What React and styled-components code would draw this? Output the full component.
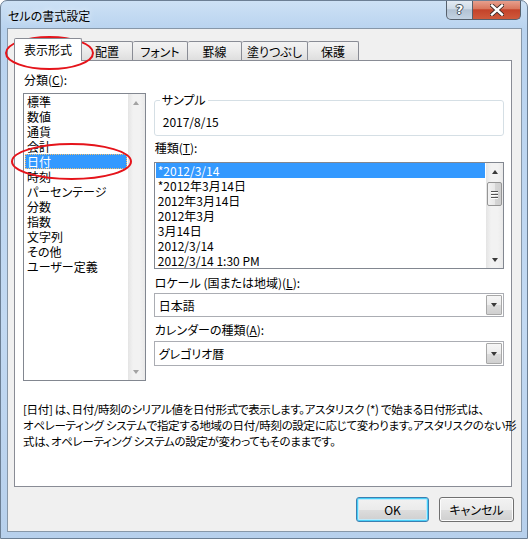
import React from 'react';
import styled, { createGlobalStyle } from 'styled-components';

const GlobalStyle = createGlobalStyle`
  html, body {
    margin: 0;
    padding: 0;
    background: #fff;
  }
  body {
    font-family: "Noto Sans CJK JP", "Noto Sans", sans-serif;
    font-size: 12px;
    color: #000;
    font-feature-settings: "palt";
  }
`;

const Window = styled.div`
  position: relative;
  width: 528px;
  height: 539px;
  box-sizing: border-box;
  border: 1px solid #6c7f94;
  border-radius: 7px 7px 0 0;
  background: linear-gradient(180deg, #cde1f5 0%, #b9d3ef 28px, #c2d9f2 60%, #b7d0ec 100%);
  display: flex;
  flex-direction: column;
  overflow: hidden;
`;

const TitleBar = styled.div`
  height: 27px;
  display: flex;
  align-items: flex-start;
  justify-content: space-between;
  padding-left: 7px;
`;

const Title = styled.div`
  margin-top: 8px;
  line-height: 14px;
  text-shadow: 0 0 6px rgba(255, 255, 255, 0.9);
`;

const CaptionButtons = styled.div`
  display: flex;
  margin-top: -1px;
  margin-right: 6px;
`;

const CaptionButton = styled.div`
  width: ${p => p.w}px;
  height: 20px;
  box-sizing: border-box;
  border: 1px solid #56606c;
  border-top: none;
  border-left-width: ${p => (p.close ? 0 : 1)}px;
  border-radius: ${p => (p.close ? '0 0 5px 0' : '0 0 0 5px')};
  background: ${p =>
    p.close
      ? 'linear-gradient(180deg, #e8a493 0%, #d9785f 45%, #c4432a 52%, #cf5a3c 100%)'
      : 'linear-gradient(180deg, #e6edf5 0%, #cfdbe7 45%, #b2c2d3 52%, #c3d3e3 100%)'};
  display: flex;
  align-items: center;
  justify-content: center;
  color: #fff;
  font-family: "DejaVu Sans", sans-serif;
  font-weight: bold;
  font-size: 13px;
  line-height: 1;
  text-shadow: 0 0 1px #2c3440, 1px 0 0 #4a5563, -1px 0 0 #4a5563, 0 1px 0 #4a5563, 0 -1px 0 #4a5563;
`;

const Client = styled.div`
  flex: 1;
  margin: 0 5px 6px 6px;
  background: #f0f0f0;
  border: 1px solid #8797a8;
  display: flex;
  flex-direction: column;
`;

const TabRow = styled.div`
  display: flex;
  align-items: flex-end;
  height: 22px;
  margin-top: 9px;
  padding-left: 6px;
`;

const Tab = styled.div`
  position: relative;
  width: ${p => p.w}px;
  height: ${p => (p.active ? 23 : 19)}px;
  margin-bottom: ${p => (p.active ? -1 : 0)}px;
  z-index: ${p => (p.active ? 1 : 0)};
  box-sizing: border-box;
  border: 1px solid #898c95;
  border-bottom: none;
  border-left-width: ${p => (p.first || p.active ? 1 : 0)}px;
  border-radius: 2px 2px 0 0;
  background: ${p => (p.active ? '#fff' : 'linear-gradient(180deg, #f3f3f3 0%, #ebebeb 50%, #dedede 100%)')};
  display: flex;
  align-items: center;
  justify-content: center;
  line-height: 14px;
  padding-top: ${p => (p.active ? 0 : 1)}px;
`;

const Panel = styled.div`
  width: 498px;
  height: 427px;
  margin-left: 6px;
  box-sizing: border-box;
  background: #fff;
  border: 1px solid #898c95;
  padding: 12px 7px 0 8px;
`;

const TopArea = styled.div`
  display: flex;
  gap: 8px;
`;

const LeftColumn = styled.div`
  width: 123px;
  display: flex;
  flex-direction: column;
`;

const RightColumn = styled.div`
  width: 351px;
  display: flex;
  flex-direction: column;
  padding-top: 20px;
`;

const Label = styled.div`
  line-height: 14px;
  margin: ${p => p.m || '0'};
  white-space: nowrap;
`;

const Key = styled.span`
  text-decoration: underline;
  text-underline-offset: 1px;
`;

const ListBox = styled.div`
  height: ${p => p.h}px;
  box-sizing: border-box;
  border: 1px solid #828790;
  display: flex;
  background: #fff;
`;

const ListItems = styled.div`
  flex: 1;
  padding: 0 ${p => p.pad}px;
  overflow: hidden;
`;

const Item = styled.div`
  height: 15px;
  line-height: 15px;
  padding-left: ${p => p.indent}px;
  white-space: nowrap;
  background: ${p => (p.selected ? '#3399ff' : 'transparent')};
  color: ${p => (p.selected ? '#fff' : '#000')};
  outline: ${p => (p.focus ? '1px dotted #f5c070' : 'none')};
  outline-offset: -1px;
`;

const ScrollBar = styled.div`
  width: 17px;
  display: flex;
  flex-direction: column;
  background: linear-gradient(90deg, #e4e4e4 0%, #f2f2f2 30%, #f2f2f2 70%, #e9e9e9 100%);
`;

const ArrowCell = styled.div`
  height: 17px;
  display: flex;
  align-items: center;
  justify-content: center;
`;

const Arrow = styled.div`
  width: 0;
  height: 0;
  border-left: 3.5px solid transparent;
  border-right: 3.5px solid transparent;
  ${p => (p.up ? 'border-bottom' : 'border-top')}: 4px solid ${p => (p.disabled ? '#a3a3a3' : '#3a3a3a')};
`;

const Track = styled.div`
  flex: 1;
  display: flex;
  flex-direction: column;
  align-items: center;
`;

const Thumb = styled.div`
  width: 15px;
  height: 24px;
  margin-top: 2px;
  box-sizing: border-box;
  border: 1px solid #959595;
  border-radius: 2px;
  background: linear-gradient(90deg, #f3f3f3 0%, #e8e8e8 50%, #d6d6d6 51%, #cfcfcf 100%);
  display: flex;
  flex-direction: column;
  align-items: center;
  justify-content: center;
  gap: 2px;
`;

const Grip = styled.div`
  width: 7px;
  height: 1px;
  background: #555;
  box-shadow: 0 1px 0 #fff;
`;

const SampleGroup = styled.fieldset`
  margin: 0;
  padding: 7px 8px 6px;
  border: 1px solid #d5dfe5;
  border-radius: 3px;
  min-width: 0;
`;

const Legend = styled.legend`
  padding: 0 2px;
  margin-left: -3px;
  line-height: 14px;
`;

const SampleValue = styled.div`
  line-height: 15px;
`;

const Combo = styled.div`
  height: ${p => p.h}px;
  box-sizing: border-box;
  border: 1px solid #abadb3;
  background: #fff;
  display: flex;
  align-items: stretch;
  padding: 1px;
`;

const ComboText = styled.div`
  flex: 1;
  padding-left: 3px;
  display: flex;
  align-items: center;
  line-height: 15px;
`;

const DropButton = styled.div`
  width: 16px;
  box-sizing: border-box;
  border: 1px solid #a8a8a8;
  border-radius: 1px;
  background: linear-gradient(180deg, #f6f6f6 0%, #ececec 50%, #dcdcdc 51%, #d0d0d0 100%);
  display: flex;
  align-items: center;
  justify-content: center;
`;

const Description = styled.p`
  margin: 20px 0 0;
  font-size: 11.5px;
  letter-spacing: -0.3px;
  line-height: 16px;
  white-space: nowrap;
`;

const ButtonRow = styled.div`
  display: flex;
  justify-content: flex-end;
  gap: 10px;
  margin-top: 10px;
  padding-right: 7px;
`;

const DialogButton = styled.button`
  width: ${p => p.w}px;
  height: 25px;
  box-sizing: border-box;
  border: 1px solid ${p => (p.focused ? '#3c7fb1' : '#707070')};
  border-radius: 3px;
  background: linear-gradient(180deg, #f2f2f2 0%, #ebebeb 50%, #dddddd 51%, #cfcfcf 100%);
  box-shadow: ${p => (p.focused ? 'inset 0 0 0 1px #48d0f8, inset 0 0 0 2px #bfeafb' : 'inset 0 0 0 1px #fcfcfc')};
  font-family: inherit;
  font-size: 12px;
  font-feature-settings: "palt";
  color: #000;
  padding: 0;
  line-height: 14px;
`;

const Annotations = styled.svg`
  position: absolute;
  left: -1px;
  top: -1px;
  pointer-events: none;
`;

const tabs = [
  { label: '表示形式', w: 68 },
  { label: '配置', w: 51 },
  { label: 'フォント', w: 55 },
  { label: '罫線', w: 54 },
  { label: '塗りつぶし', w: 66 },
  { label: '保護', w: 51 },
];

const categories = [
  '標準', '数値', '通貨', '会計', '日付', '時刻', 'パーセンテージ',
  '分数', '指数', '文字列', 'その他', 'ユーザー定義',
];

const types = [
  '*2012/3/14',
  '*2012年3月14日',
  '2012年3月14日',
  '2012年3月',
  '3月14日',
  '2012/3/14',
  '2012/3/14 1:30 PM',
];

const HelpIcon = () => <span>?</span>;

const CloseIcon = () => (
  <svg width="14" height="12" viewBox="0 0 14 12">
    <path d="M2 1.5 L12 10.5 M12 1.5 L2 10.5" stroke="#3b2a26" strokeWidth="4.2" strokeLinecap="square" fill="none" />
    <path d="M2 1.5 L12 10.5 M12 1.5 L2 10.5" stroke="#fff" strokeWidth="2.4" strokeLinecap="square" fill="none" />
  </svg>
);

const App = () => {
  return (
    <>
      <GlobalStyle />
      <Window>
        <TitleBar>
          <Title>セルの書式設定</Title>
          <CaptionButtons>
            <CaptionButton w={27}><HelpIcon /></CaptionButton>
            <CaptionButton w={48} close><CloseIcon /></CaptionButton>
          </CaptionButtons>
        </TitleBar>
        <Client>
          <TabRow>
            {tabs.map((t, i) => (
              <Tab key={t.label} w={t.w} active={i === 0} first={i === 0}>{t.label}</Tab>
            ))}
          </TabRow>
          <Panel>
            <TopArea>
              <LeftColumn>
                <Label m="0 0 6px 1px">分類(<Key>C</Key>):</Label>
                <ListBox h={288}>
                  <ListItems pad={1}>
                    {categories.map(c => (
                      <Item key={c} indent={2} selected={c === '日付'} focus={c === '日付'}>{c}</Item>
                    ))}
                  </ListItems>
                  <ScrollBar>
                    <ArrowCell><Arrow up disabled /></ArrowCell>
                    <Track />
                    <ArrowCell><Arrow disabled /></ArrowCell>
                  </ScrollBar>
                </ListBox>
              </LeftColumn>
              <RightColumn>
                <SampleGroup>
                  <Legend>サンプル</Legend>
                  <SampleValue>2017/8/15</SampleValue>
                </SampleGroup>
                <Label m="5px 0 7px 1px">種類(<Key>T</Key>):</Label>
                <ListBox h={107}>
                  <ListItems pad={1}>
                    {types.map((t, i) => (
                      <Item key={t + i} indent={2} selected={i === 0}>{t}</Item>
                    ))}
                  </ListItems>
                  <ScrollBar>
                    <ArrowCell><Arrow up /></ArrowCell>
                    <Track>
                      <Thumb>
                        <Grip />
                        <Grip />
                        <Grip />
                      </Thumb>
                    </Track>
                    <ArrowCell><Arrow /></ArrowCell>
                  </ScrollBar>
                </ListBox>
                <Label m="7px 0 3px 1px">ロケール (国または地域)(<Key>L</Key>):</Label>
                <Combo h={24}>
                  <ComboText>日本語</ComboText>
                  <DropButton><Arrow /></DropButton>
                </Combo>
                <Label m="6px 0 4px 1px">カレンダーの種類(<Key>A</Key>):</Label>
                <Combo h={25}>
                  <ComboText>グレゴリオ暦</ComboText>
                  <DropButton><Arrow /></DropButton>
                </Combo>
              </RightColumn>
            </TopArea>
            <Description>
              [日付] は、日付/時刻のシリアル値を日付形式で表示します。アスタリスク (*) で始まる日付形式は、<br />
              オペレーティング システムで指定する地域の日付/時刻の設定に応じて変わります。アスタリスクのない形<br />
              式は、オペレーティング システムの設定が変わってもそのままです。
            </Description>
          </Panel>
          <ButtonRow>
            <DialogButton w={73} focused>OK</DialogButton>
            <DialogButton w={75}>キャンセル</DialogButton>
          </ButtonRow>
        </Client>
        <Annotations width="528" height="539" viewBox="0 0 528 539">
          <ellipse cx="49.5" cy="53" rx="43.5" ry="16" fill="none" stroke="#e5141b" strokeWidth="2" />
          <ellipse cx="71.5" cy="161.5" rx="59.5" ry="17.5" fill="none" stroke="#e5141b" strokeWidth="2" />
        </Annotations>
      </Window>
    </>
  );
};

export default App;
